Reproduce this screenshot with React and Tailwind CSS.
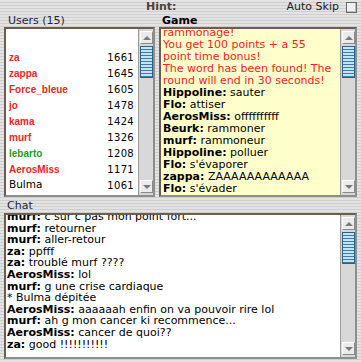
import React from "react";

const users = [
  { name: "za", score: 1661, color: "text-[#f02424]", bold: true },
  { name: "zappa", score: 1645, color: "text-[#f02424]", bold: true },
  { name: "Force_bleue", score: 1605, color: "text-[#f02424]", bold: true },
  { name: "jo", score: 1478, color: "text-[#f02424]", bold: true },
  { name: "kama", score: 1424, color: "text-[#f02424]", bold: true },
  { name: "murf", score: 1326, color: "text-[#f02424]", bold: true },
  { name: "lebarto", score: 1208, color: "text-[#239a23]", bold: true },
  { name: "AerosMiss", score: 1171, color: "text-[#f02424]", bold: true },
  { name: "Bulma", score: 1061, color: "text-black", bold: false },
];

const gameNotice = [
  "rammonage!",
  "You get 100 points + a 55",
  "point time bonus!",
  "The word has been found! The",
  "round will end in 30 seconds!",
];

const gameLog = [
  ["Hippoline", "sauter"],
  ["Flo", "attiser"],
  ["AerosMiss", "offffffffff"],
  ["Beurk", "rammoner"],
  ["murf", "rammoneur"],
  ["Hippoline", "polluer"],
  ["Flo", "s'évaporer"],
  ["zappa", "ZAAAAAAAAAAAA"],
  ["Flo", "s'évader"],
];

const chat = [
  ["murf", "c sur c pas mon point fort..."],
  ["murf", "retourner"],
  ["murf", "aller-retour"],
  ["za", "ppfff"],
  ["za", "troublé murf ????"],
  ["AerosMiss", "lol"],
  ["murf", "g une crise cardiaque"],
  [null, "* Bulma dépitée"],
  ["AerosMiss", "aaaaaah enfin on va pouvoir rire lol"],
  ["murf", "ah g mon cancer ki recommence..."],
  ["AerosMiss", "cancer de quoi??"],
  ["za", "good !!!!!!!!!!!"],
];

function ArrowButton({ up }) {
  return (
    <div className="w-[13px] h-[13px] shrink-0 bg-[#ebebeb] border border-t-white border-l-white border-r-[#8a8a8a] border-b-[#8a8a8a] flex items-center justify-center">
      {up ? (
        <div className="w-0 h-0 border-x-[4px] border-x-transparent border-b-[4px] border-b-[#7a7a7a]" />
      ) : (
        <div className="w-0 h-0 border-x-[4px] border-x-transparent border-t-[4px] border-t-[#7a7a7a]" />
      )}
    </div>
  );
}

function ScrollBar() {
  return (
    <div className="w-[15px] shrink-0 h-full flex flex-col bg-[#d8d8d8] border-l border-[#9c9c9c] pl-[1px] py-[2px]">
      <ArrowButton up />
      <div className="mt-[2px] w-[13px] h-[32px] border border-[#2f5f82] bg-[repeating-linear-gradient(to_bottom,#c4e5f7_0px,#c4e5f7_2px,#3f7ba6_2px,#3f7ba6_3px)]" />
      <div className="flex-1" />
      <ArrowButton />
    </div>
  );
}

const boxBorder =
  "border-2 border-t-[#6b5d50] border-l-[#6b5d50] border-r-[#8e8e8e] border-b-[#8e8e8e]";

export default function App() {
  return (
    <div className="w-[361px] h-[362px] overflow-hidden flex flex-col px-[4px] text-[11px] text-[#1a1a1a] font-['DejaVu_Sans',sans-serif] bg-[repeating-linear-gradient(to_bottom,#e3e3e3_0px,#e3e3e3_2px,#cecece_2px,#cecece_3px)]">
      {/* Hint row */}
      <div className="h-[14px] flex items-center">
        <span className="ml-[142px] font-bold text-[#4a4238] leading-[14px]">Hint:</span>
        <span className="flex-1" />
        <span className="leading-[14px] text-[#222]">Auto Skip</span>
        <span className="ml-[7px] w-[11px] h-[11px] border border-[#6a6a6a] bg-[#f0f0f0] shadow-[inset_-1px_-1px_0_#bdbdbd]" />
      </div>

      {/* Labels */}
      <div className="h-[13px] flex leading-[13px]">
        <div className="w-[151px] pl-[4px] text-[#1c2340]">Users (15)</div>
        <div className="ml-[4px] pl-[3px] font-bold text-black">Game</div>
      </div>

      {/* Users + Game */}
      <div className="h-[170px] flex gap-[4px]">
        <div className={`w-[151px] h-full flex bg-white ${boxBorder}`}>
          <div className="flex-1 pt-[20px] pl-[3px] pr-[4px]">
            {users.map((u) => (
              <div key={u.name} className="h-[16px] flex items-center justify-between">
                <span
                  className={
                    u.bold
                      ? `font-['Liberation_Sans',sans-serif] font-bold text-[10px] ${u.color}`
                      : `text-[10.5px] ${u.color}`
                  }
                >
                  {u.name}
                </span>
                <span className="text-[10px] tracking-[0.3px] text-black">{u.score}</span>
              </div>
            ))}
          </div>
          <ScrollBar />
        </div>

        <div className={`flex-1 h-full flex bg-[#ffffcc] ${boxBorder}`}>
          <div className="flex-1 overflow-hidden pl-[2px]">
            <div className="-mt-[2px] leading-[12px] whitespace-nowrap">
              {gameNotice.map((l) => (
                <div key={l} className="text-[#f02424]">
                  {l}
                </div>
              ))}
              {gameLog.map(([n, w], i) => (
                <div key={i} className="text-black">
                  <span className="font-bold">{n}:</span> {w}
                </div>
              ))}
            </div>
          </div>
          <ScrollBar />
        </div>
      </div>

      {/* Chat label */}
      <div className="h-[16px] pl-[3px] pt-[2px] leading-[13px] text-[#1c2340]">Chat</div>

      {/* Chat box */}
      <div className={`h-[146px] flex bg-white ${boxBorder}`}>
        <div className="flex-1 overflow-hidden pl-[1px]">
          <div className="-mt-[4px] leading-[11.6px] whitespace-nowrap text-black">
            {chat.map(([n, t], i) => (
              <div key={i}>
                {n ? (
                  <>
                    <span className="font-bold">{n}:</span> {t}
                  </>
                ) : (
                  t
                )}
              </div>
            ))}
          </div>
        </div>
        <ScrollBar />
      </div>
    </div>
  );
}
